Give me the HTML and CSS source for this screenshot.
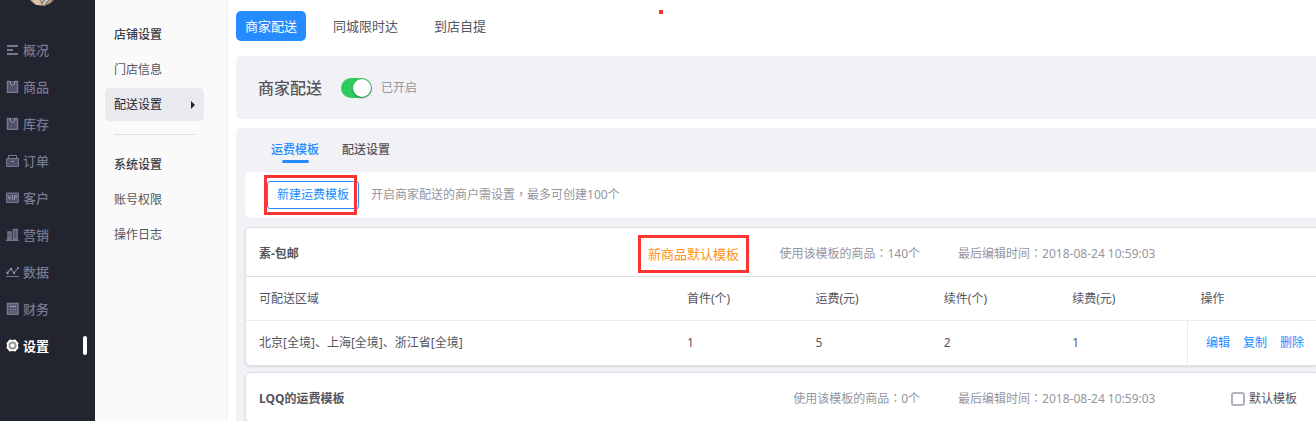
FILE: index.html
```html
<!DOCTYPE html>
<html lang="zh-CN">
<head>
    <meta charset="UTF-8">
    <meta name="viewport" content="width=device-width, initial-scale=1.0">
    <title>配送设置</title>
    <link rel="stylesheet" href="styles.css">
</head>
<body>

    <!-- Sidebar -->
    <nav class="sidebar">
        <svg class="avatar" viewBox="0 0 30 30">
            <circle cx="15" cy="15" r="15" fill="#9a7556"/>
            <path d="M3 23 L11 21 L15 29 L9 29 Z" fill="#d8c3a8"/>
            <path d="M13 23 L20 20 L24 25 L17 30 Z" fill="#c9c6c0"/>
            <path d="M15 27 L19 22 M18 29 L23 23" stroke="#57504a" stroke-width="1"/>
        </svg>
        <a href="#"><svg class="icon" viewBox="0 0 13 13"><path d="M1 3h11M1 7h6M1 11h11" stroke="#777990" stroke-width="2"/></svg>概况</a>
        <a href="#"><svg class="icon" viewBox="0 0 13 13"><path d="M4 1.500H1.500v11h10v-11H9" fill="#50526a" stroke="#777990" stroke-width="1.500"/><path d="M4.500 1v3l2 2 2-2V1" fill="#50526a" stroke="#9092a6"/></svg>商品</a>
        <a href="#"><svg class="icon" viewBox="0 0 13 13"><path d="M4 1.500H1.500v11h10v-11H9" fill="#50526a" stroke="#777990" stroke-width="1.500"/><path d="M4.500 1v3l2 2 2-2V1" fill="#50526a" stroke="#9092a6"/></svg>库存</a>
        <a href="#"><svg class="icon" viewBox="0 0 13 13"><path d="M.5 4.500h12v8H.5z" fill="#50526a" stroke="#777990"/><path d="M2.500 4V1.500h8V4" fill="none" stroke="#777990"/><path d="M5 7.500h3" stroke="#9092a6"/></svg>订单</a>
        <a href="#"><svg class="icon" viewBox="0 0 13 13"><path d="M.5 2h12v9.500H.5z" fill="#50526a" stroke="#777990"/><path d="M2 4.500l1.500 4 1.500-4M6.500 4v5M8.500 9V4.500h2v2h-2" fill="none" stroke="#9092a6"/></svg>客户</a>
        <a href="#"><svg class="icon" viewBox="0 0 13 13"><path d="M2 4h3v7H2zM7.500 1.500h3.500V11H7.500z" fill="#50526a" stroke="#777990" stroke-width="1.500"/><path d="M0 12.200h13" stroke="#777990" stroke-width="1.500"/></svg>营销</a>
        <a href="#"><svg class="icon" viewBox="0 0 13 13"><path d="M1 8l4-4 3 4 4-5M0 11.500h13" fill="none" stroke="#777990" stroke-width="1.200"/><circle cx="1.500" cy="8" r="1.200" fill="#9092a6"/><circle cx="5" cy="4" r="1.200" fill="#9092a6"/><circle cx="8" cy="8" r="1.200" fill="#9092a6"/><circle cx="12" cy="3" r="1" fill="#9092a6"/></svg>数据</a>
        <a href="#"><svg class="icon" viewBox="0 0 13 13"><path d="M1.500 1.500h10.500v11H1.500z" fill="#50526a" stroke="#777990" stroke-width="1.500"/><path d="M3.500 4.500h6.500" stroke="#9092a6" stroke-width="1.500"/><path d="M4 7.500h7M4 10h7" stroke="#9092a6" stroke-dasharray="1.300 1.200"/></svg>财务</a>
        <a href="#" class="active"><svg class="icon" viewBox="0 0 13 13"><path d="M3.500 .5L6.500 1l3-.5 1.500 2 1.500 1.500-.5 2.500.5 2.500L11 10.500l-1.500 2-3-.5-3 .5-1.500-2L.5 9 1 6.500.5 4 2 2.500z" fill="#fff"/><circle cx="6.500" cy="6.500" r="4" fill="#989898"/><circle cx="6.500" cy="6.500" r="2" fill="#fff"/></svg>设置</a>
    </nav>

    <!-- Second level menu -->
    <nav class="submenu">
        <h2>店铺设置</h2>
        <a href="#">门店信息</a>
        <a href="#" class="active">配送设置</a>
        <hr>
        <h2>系统设置</h2>
        <a href="#">账号权限</a>
        <a href="#">操作日志</a>
    </nav>

    <!-- Main Content -->
    <main class="content">
        <span class="red-dot"></span>
        <div class="tabs">
            <button class="tab active">商家配送</button>
            <button class="tab">同城限时达</button>
            <button class="tab">到店自提</button>
        </div>

        <div class="status-bar">
            <h1>商家配送</h1>
            <input type="checkbox" class="switch" id="deliverySwitch" checked>
            <label for="deliverySwitch">已开启</label>
        </div>

        <section class="panel">
            <div class="panel-tabs">
                <button class="active">运费模板</button>
                <button>配送设置</button>
            </div>

            <div class="toolbar">
                <span class="create marked"><button class="create-btn">新建运费模板</button></span>
                <p>开启商家配送的商户需设置<span class="mid" lang="zh-TW">，</span>最多可创建100个</p>
            </div>

            <article class="card">
                <header class="card-header">
                    <div class="card-name">
                        <h3>素-包邮</h3>
                        <span class="default-tag marked">新商品默认模板</span>
                    </div>
                    <span class="used">使用该模板的商品<span class="mid" lang="zh-TW">：</span>140个</span>
                    <span class="edited">最后编辑时间<span class="mid" lang="zh-TW">：</span>2018-08-24 10:59:03</span>
                </header>
                <table>
                    <thead>
                        <tr>
                            <th class="area">可配送区域</th>
                            <th>首件(个)</th>
                            <th>运费(元)</th>
                            <th>续件(个)</th>
                            <th>续费(元)</th>
                            <th>操作</th>
                        </tr>
                    </thead>
                    <tbody>
                        <tr>
                            <td>北京[全境]、上海[全境]、浙江省[全境]</td>
                            <td>1</td>
                            <td>5</td>
                            <td>2</td>
                            <td>1</td>
                            <td class="actions"><a href="#">编辑</a><a href="#">复制</a><a href="#">删除</a></td>
                        </tr>
                    </tbody>
                </table>
            </article>

            <article class="card">
                <header class="card-header">
                    <div class="card-name">
                        <h3>LQQ的运费模板</h3>
                    </div>
                    <span class="used">使用该模板的商品<span class="mid" lang="zh-TW">：</span>0个</span>
                    <span class="edited">最后编辑时间<span class="mid" lang="zh-TW">：</span>2018-08-24 10:59:03</span>
                    <label class="set-default"><input type="checkbox">默认模板</label>
                </header>
            </article>
        </section>
    </main>

</body>
</html>
```
FILE: styles.css
```css
/* General Styles */
* {
    box-sizing: border-box;
}

body {
    margin: 0;
    height: 100vh;
    overflow: hidden;
    display: flex;
    font-family: "Noto Sans", "Noto Sans CJK SC", sans-serif;
    font-size: 12px;
    line-height: 18px;
    color: #55555d;
    background-color: #fff;
}

h1, h2, h3, p {
    margin: 0;
}

a {
    text-decoration: none;
}

button {
    font: inherit;
    color: inherit;
    padding: 0;
    border: none;
    background: none;
    cursor: pointer;
}

/* Sidebar */
.sidebar {
    flex: none;
    width: 95px;
    background-color: #22242f;
}

.avatar {
    display: block;
    width: 30px;
    height: 30px;
    margin: -24px 0 25px 27px;
}

.sidebar a {
    display: flex;
    align-items: center;
    gap: 4px;
    height: 37px;
    padding: 0 8px 0 6px;
    font-size: 13px;
    font-weight: 500;
    color: #777990;
}

.sidebar a.active {
    color: #fff;
    font-weight: bold;
}

.sidebar a.active::after {
    content: "";
    width: 4px;
    height: 19px;
    margin-left: auto;
    border-radius: 2px;
    background-color: #fff;
}

.icon {
    width: 13px;
    height: 13px;
}

/* Second level menu */
.submenu {
    flex: none;
    width: 131px;
    padding: 18px 22px 0 10px;
    background-color: #fafafa;
    box-shadow: 0 0 3px rgba(0, 0, 0, 0.15);
}

.submenu h2,
.submenu a {
    display: flex;
    align-items: center;
    justify-content: space-between;
    height: 33px;
    margin-bottom: 2px;
    padding: 0 9px;
    font-size: 12px;
    color: #55555d;
}

.submenu h2 {
    font-weight: 500;
    color: #3c3c44;
}

.submenu a.active {
    border-radius: 5px;
    color: #22242f;
    background-color: #e9e9f0;
}

.submenu a.active::after {
    content: "";
    border: 4px solid transparent;
    border-left-color: #22242f;
    border-right: none;
}

.submenu hr {
    margin: 13px 9px;
    border: none;
    border-top: 1px solid #dedee2;
}

/* Main Content */
.content {
    flex: 1;
    min-width: 0;
    display: flex;
    flex-direction: column;
    position: relative;
    padding: 11px 0 0 10px;
}

.tabs {
    display: flex;
    flex: none;
    gap: 18px;
    margin-bottom: 15px;
}

.tab {
    height: 30px;
    padding: 0 9px;
    border-radius: 5px;
    font-size: 13px;
}

.tab.active {
    color: #fff;
    background-color: #268bff;
}

.status-bar {
    display: flex;
    flex: none;
    align-items: center;
    height: 63px;
    margin-bottom: 9px;
    padding-left: 22px;
    border-radius: 5px 0 0 5px;
    background-color: #f1f1f6;
    color: #95959d;
}

.status-bar h1 {
    font-size: 16px;
    font-weight: 500;
    color: #55555d;
}

/* Switch */
.switch {
    appearance: none;
    display: flex;
    width: 31px;
    height: 20px;
    margin: 0 9px 0 19px;
    padding: 1px;
    border-radius: 10px;
    background-color: #c8c8ce;
}

.switch::before {
    content: "";
    width: 18px;
    height: 18px;
    border-radius: 50%;
    background-color: #fff;
    box-shadow: 0 1px 2px rgba(0, 0, 0, 0.4);
}

.switch:checked {
    justify-content: flex-end;
    background-color: #2dca5c;
}

/* Template panel */
.panel {
    flex: 1 0 auto;
    padding-left: 9px;
    border-radius: 5px 0 0 0;
    background-color: #f1f1f6;
}

.panel-tabs {
    display: flex;
    align-items: flex-start;
    gap: 23px;
    height: 44px;
    padding: 13px 0 0 26px;
    font-weight: 500;
}

.panel-tabs button {
    display: flex;
    flex-direction: column;
    align-items: center;
    gap: 1px;
}

.panel-tabs .active {
    color: #268bff;
}

.panel-tabs .active::after {
    content: "";
    width: 27px;
    height: 3px;
    border-radius: 2px;
    background-color: #268bff;
}

.toolbar {
    display: flex;
    align-items: center;
    gap: 12px;
    height: 46px;
    margin-bottom: 9px;
    padding-left: 22px;
    border-radius: 5px 0 0 5px;
    background-color: #fff;
    color: #95959d;
}

.create-btn {
    height: 28px;
    padding: 0 9px;
    border: 1px solid #268bff;
    border-radius: 3px;
    color: #268bff;
}

/* Red marks */
.marked {
    position: relative;
}

.marked::after {
    content: "";
    position: absolute;
    inset: -10px;
    border: 3px solid #fc3434;
    pointer-events: none;
}

.create.marked::after {
    inset: -6px 2px -6px -3px;
}

.red-dot {
    position: absolute;
    top: 10px;
    left: 433px;
    width: 4px;
    height: 4px;
    background-color: #fc3434;
}

/* Template cards */
.card {
    margin-bottom: 6px;
    border: 1px solid #e0e0e4;
    border-right: none;
    border-radius: 5px 0 0 5px;
    background-color: #fff;
    box-shadow: 0 1px 3px rgba(0, 0, 0, 0.1);
}

.card-header {
    display: grid;
    grid-template-columns: 47% 16% 1fr auto;
    align-items: center;
    height: 48px;
    padding-top: 4px;
    color: #95959d;
}

.card-name {
    display: flex;
    align-items: center;
    justify-content: space-between;
    padding: 0 10px 0 13px;
}

.card-name h3 {
    font-size: 12px;
    font-weight: bold;
    color: #55555d;
}

.default-tag {
    font-size: 13px;
    color: #ff9212;
}

.used {
    text-align: right;
}

.edited {
    padding-left: 38px;
}

.mid {
    font-family: "Noto Sans CJK TC", sans-serif;
    line-height: 1;
}

.set-default {
    display: flex;
    align-items: center;
    gap: 4px;
    padding-right: 19px;
    color: #55555d;
}

.set-default input {
    appearance: none;
    width: 14px;
    height: 14px;
    margin: 0;
    border: 2px solid #b3b0bf;
    border-radius: 3px;
    background-color: #fff;
}

table {
    width: 100%;
    table-layout: fixed;
    border-collapse: collapse;
    border-top: 1px solid #dcdce0;
}

th,
td {
    width: 12%;
    height: 44px;
    padding: 0 13px;
    text-align: left;
    font-weight: normal;
    white-space: nowrap;
}

.area {
    width: 40%;
}

td {
    border-top: 1px solid #ebebee;
}

.actions {
    padding: 0 0 0 18px;
    border-left: 1px solid #ebebee;
}

.actions a {
    margin-right: 13px;
    color: #268bff;
}
```
